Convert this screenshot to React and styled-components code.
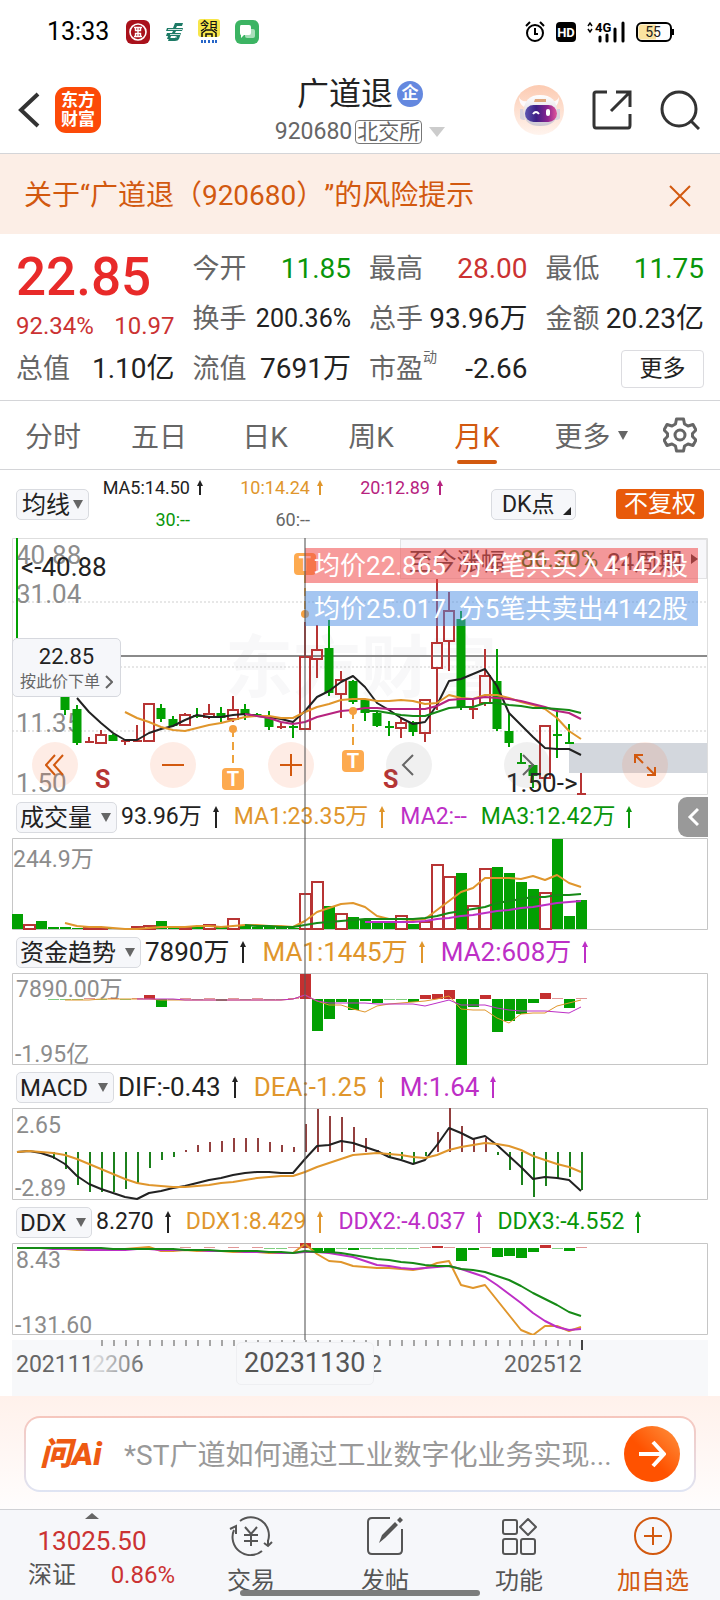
import React from "react";
import styled, { createGlobalStyle } from "styled-components";

const RED = "#cb3232";
const UP = "#b73434";
const GREEN = "#0a960a";
const BAR_GREEN = "#02a002";
const ORANGE = "#e0962c";
const PURPLE = "#bd2fc6";
const MAGENTA = "#b7237f";
const BRAND = "#d2590f";
const INK = "#222222";

const GlobalStyle = createGlobalStyle`
  * { box-sizing: border-box; }
  body {
    margin: 0;
    background: #fff;
    color: ${INK};
    font-family: Roboto, "Noto Sans CJK SC", sans-serif;
    text-spacing-trim: space-all;
  }
  button, input, select { font-family: inherit; color: inherit; }
  button { border: 0; padding: 0; background: none; cursor: pointer; }
  svg { display: block; }
`;

const Page = styled.div`
  width: 100%;
  min-height: 100vh;
  display: flex;
  flex-direction: column;
  background: #fff;
`;

/* ---------- status bar ---------- */
const StatusBar = styled.div`
  height: 64px;
  padding: 0 46px 0 47px;
  display: flex;
  align-items: center;
  justify-content: space-between;
`;
const StatusGroup = styled.div`
  display: flex;
  align-items: center;
  gap: ${(p) => p.$gap}px;
`;
const Clock = styled.span`
  font-size: 25px;
  line-height: 30px;
  color: #000;
  margin-right: 2px;
`;

/* ---------- title bar ---------- */
const TitleBar = styled.header`
  height: 90px;
  padding: 2px 20px 0 16px;
  border-bottom: 1px solid #d4d5d8;
  display: grid;
  grid-template-columns: 1fr auto 1fr;
  align-items: center;
`;
const BarSide = styled.div`
  display: flex;
  align-items: center;
  justify-content: ${(p) => (p.$end ? "flex-end" : "flex-start")};
  gap: ${(p) => p.$gap}px;
`;
const IconButton = styled.button`
  display: flex;
  align-items: center;
  justify-content: center;
`;
const BrandTile = styled.a`
  width: 46px;
  height: 46px;
  border-radius: 11px;
  background: #fc4a08;
  color: #fff;
  font-size: 17px;
  line-height: 19px;
  font-weight: 700;
  text-align: center;
  text-decoration: none;
  padding-top: 4px;
`;
const Titles = styled.div`
  display: flex;
  flex-direction: column;
  align-items: center;
  gap: 2px;
  padding-left: 4px;
`;
const StockName = styled.h1`
  margin: 0;
  display: flex;
  align-items: center;
  gap: 4px;
  font-size: 32px;
  line-height: 42px;
  font-weight: 400;
`;
const CorpBadge = styled.span`
  width: 26px;
  height: 26px;
  border-radius: 50%;
  background: #6488df;
  color: #fff;
  font-size: 17px;
  line-height: 25px;
  font-weight: 700;
  text-align: center;
`;
const CodeLine = styled.button`
  display: flex;
  align-items: center;
  gap: 3px;
  font-size: 23px;
  line-height: 30px;
  color: #666;
`;
const Exchange = styled.span`
  border: 1px solid #777;
  border-radius: 4px;
  font-size: 21px;
  line-height: 22px;
  padding: 0 1px;
`;
const Triangle = styled.span`
  width: 0;
  height: 0;
  flex: none;
  border-left: ${(p) => p.$w || 5}px solid transparent;
  border-right: ${(p) => p.$w || 5}px solid transparent;
  border-top: ${(p) => p.$h || 9}px solid ${(p) => p.$color || "#666"};
  margin-left: ${(p) => p.$ml || 0}px;
`;

/* ---------- notice ---------- */
const Notice = styled.div`
  height: 80px;
  padding: 3px 29px 0 24px;
  background: #fceee6;
  color: ${BRAND};
  display: flex;
  align-items: center;
  justify-content: space-between;
  font-size: 28px;
  line-height: 40px;
`;

/* ---------- quote ---------- */
const Quote = styled.section`
  height: 167px;
  padding: 10px 16px 0;
  border-bottom: 1px solid #d4d5d8;
  display: grid;
  grid-template-columns: repeat(4, 1fr);
  grid-template-rows: repeat(3, 50px);
  column-gap: 18px;
`;
const PriceBlock = styled.div`
  grid-row: span 2;
  color: ${RED};
`;
const BigPrice = styled.div`
  font-size: 53px;
  line-height: 66px;
  font-weight: 500;
  color: #e82a29;
`;
const Change = styled.div`
  display: flex;
  justify-content: space-between;
  font-size: 24px;
  line-height: 32px;
`;
const Stat = styled.div`
  display: flex;
  align-items: center;
  justify-content: space-between;
  white-space: nowrap;
  line-height: 40px;
`;
const StatLabel = styled.span`
  font-size: 27px;
  color: #666;
`;
const Sup = styled.sup`
  font-size: 14px;
  line-height: 14px;
  vertical-align: 16px;
`;
const StatValue = styled.span`
  font-size: ${(p) => (p.$small ? 25 : 28)}px;
  color: ${(p) => p.$color || INK};
`;
const MoreButton = styled.button`
  justify-self: end;
  align-self: center;
  width: 83px;
  height: 38px;
  border: 1px solid #dcdce0;
  border-radius: 4px;
  font-size: 23px;
  line-height: 34px;
`;

/* ---------- tabs ---------- */
const Tabs = styled.nav`
  height: 69px;
  padding-right: 12px;
  border-bottom: 1px solid #d4d5d8;
  display: grid;
  grid-template-columns: repeat(5, 106fr) 122fr 56fr;
`;
const Tab = styled.button`
  display: flex;
  align-items: center;
  justify-content: center;
  gap: 7px;
  font-size: 28px;
  color: ${(p) => (p.$active ? BRAND : "#666")};
  position: relative;
  &::after {
    content: "";
    display: ${(p) => (p.$active ? "block" : "none")};
    position: absolute;
    left: calc(50% - 20px);
    bottom: 5px;
    width: 40px;
    height: 4px;
    border-radius: 2px;
    background: ${BRAND};
  }
`;

/* ---------- moving averages ---------- */
const AverageRow = styled.div`
  height: 68px;
  padding: 0 16px;
  display: flex;
  align-items: center;
`;
const AverageGrid = styled.div`
  display: grid;
  grid-template-columns: 115px 120px 120px;
  grid-auto-rows: 32px;
  margin-right: auto;
  margin-bottom: 2px;
`;
const Average = styled.div`
  display: flex;
  align-items: center;
  justify-content: flex-end;
  gap: 6px;
  font-size: 18px;
  color: ${(p) => p.$color};
`;
const ArrowSlot = styled.span`
  width: 8px;
  flex: none;
`;
const Pill = styled.label`
  position: relative;
  height: 31px;
  border: 1px solid #d9dbe0;
  border-radius: 5px;
  background: #f6f7fa;
  display: flex;
  align-items: center;
  flex: none;
  padding-right: 5px;
`;
const PillSelect = styled.select`
  appearance: none;
  border: 0;
  background: none;
  margin: 0;
  padding: 1px 0 0 ${(p) => p.$pad}px;
  font-size: 24px;
  line-height: 28px;
  height: 29px;
  color: ${INK};
`;
const DkButton = styled.button`
  position: relative;
  width: 85px;
  height: 31px;
  border: 1px solid #d9dbe0;
  border-radius: 5px;
  background: #f6f7fa;
  font-size: 23px;
  line-height: 29px;
  text-align: left;
  padding-left: 10px;
  margin-right: 40px;
  &::after {
    content: "";
    position: absolute;
    right: 4px;
    bottom: 4px;
    border-left: 8px solid transparent;
    border-bottom: 8px solid ${INK};
  }
`;
const AdjustButton = styled.button`
  width: 88px;
  height: 30px;
  border-radius: 4px;
  background: #e85a0a;
  color: #fff;
  font-size: 24px;
  line-height: 30px;
`;

/* ---------- charts ---------- */
const ChartStack = styled.section`
  position: relative;
  padding: 0 12px;
`;
const Frame = styled.div`
  position: relative;
  border-radius: 1px;
  box-shadow: inset 0 0 0 1px ${(p) => p.$line || "#c6c6c6"};
`;
const ChartSvg = styled.svg`
  width: 100%;
  height: auto;
`;
const CrossLine = styled.div`
  position: absolute;
  top: 0;
  bottom: 56px;
  left: 42.2%;
  width: 2px;
  background: rgba(90, 90, 90, 0.55);
  pointer-events: none;
`;
const PeriodButton = styled.button`
  position: absolute;
  top: 1px;
  right: 1px;
  height: 40px;
  width: 44.1%;
  background: #f7f7fa;
  border: 1px solid #e2e2e4;
  display: flex;
  align-items: center;
  justify-content: center;
  gap: 9px;
  font-size: 24px;
  color: #333;
  white-space: nowrap;
`;
const PeriodValue = styled.span`
  color: #0a7a0a;
`;
const SideTriangle = styled.span`
  border-top: 5px solid transparent;
  border-bottom: 5px solid transparent;
  border-left: 7px solid #333;
`;
const Banner = styled.div`
  position: absolute;
  top: ${(p) => p.$top}px;
  left: 42.1%;
  right: 10px;
  height: 35px;
  padding-left: 9px;
  background: ${(p) => p.$bg};
  color: #fff;
  font-size: 26px;
  line-height: 36px;
  white-space: pre;
`;
const OrderButton = styled.button`
  position: absolute;
  left: 0;
  top: 100px;
  width: 109px;
  height: 59px;
  border: 1px solid #d6d8de;
  border-radius: 5px;
  background: #f6f7fa;
  display: flex;
  flex-direction: column;
  align-items: center;
  justify-content: center;
  padding-top: 2px;
  font-size: 22px;
  line-height: 27px;
`;
const OrderHint = styled.span`
  display: flex;
  align-items: center;
  gap: 5px;
  font-size: 16px;
  line-height: 24px;
  color: #666;
`;
const ZoomTools = styled.div`
  position: absolute;
  left: 20px;
  right: 40px;
  top: 204px;
  display: flex;
  justify-content: space-between;
`;
const ToolButton = styled.button`
  width: 46px;
  height: 46px;
  border-radius: 50%;
  background: ${(p) => (p.$gray ? "rgba(110,110,110,.1)" : "rgba(246,120,70,.14)")};
  display: flex;
  align-items: center;
  justify-content: center;
`;
const IndicatorHead = styled.div`
  height: 43px;
  padding: 1px 0 0 4px;
  display: flex;
  align-items: center;
  white-space: nowrap;
`;
const Readings = styled.div`
  display: flex;
  align-items: center;
  gap: ${(p) => (p.$compact ? 14 : 15)}px;
  margin: 0 auto 0 4px;
  font-size: ${(p) => (p.$compact ? 23 : 26)}px;
  line-height: 32px;
`;
const Reading = styled.span`
  display: flex;
  align-items: center;
  gap: 10px;
  color: ${(p) => p.$color};
`;
const CollapseButton = styled.button`
  width: 30px;
  height: 40px;
  border-radius: 9px 0 0 9px;
  background: #999;
  display: flex;
  align-items: center;
  justify-content: center;
`;
const Axis = styled.div`
  position: relative;
  margin-top: 5px;
  background: #f7f8fa;
`;
const CursorDate = styled.div`
  position: absolute;
  left: 32.2%;
  top: 2px;
  height: 43px;
  padding: 0 7px;
  border: 1px solid #eeeff2;
  border-radius: 5px;
  background: #f7f8fa;
  color: #555;
  font-size: 27px;
  line-height: 41px;
`;

/* ---------- AI question ---------- */
const AskPanel = styled.section`
  padding: 20px 24px 17px;
  background: linear-gradient(#fff1eb, #fffdfd);
`;
const AskBox = styled.form`
  height: 76px;
  border: 2px solid transparent;
  border-radius: 16px;
  background: linear-gradient(#fff, #fff) padding-box, linear-gradient(#f6c6bd, #dfe4f3) border-box;
  display: flex;
  align-items: center;
  padding: 0 14px;
`;
const AskLogo = styled.span`
  width: 79px;
  flex: none;
  color: #ee5a12;
  font-size: 32px;
  line-height: 40px;
  font-weight: 900;
  font-style: italic;
`;
const AskInput = styled.input`
  flex: 1;
  min-width: 0;
  margin: 0 12px 0 5px;
  padding: 3px 0 0;
  border: 0;
  outline: 0;
  background: none;
  font-size: 28px;
  line-height: 40px;
  height: 44px;
  &::placeholder { color: #999; opacity: 1; }
`;
const SendButton = styled.button`
  width: 56px;
  height: 56px;
  flex: none;
  border-radius: 50%;
  background: linear-gradient(45deg, #ff5200 45%, #ff9440);
  display: flex;
  align-items: center;
  justify-content: center;
`;

/* ---------- bottom bar ---------- */
const BottomBar = styled.footer`
  position: relative;
  height: 91px;
  border-top: 1px solid #d0d1d5;
  background: #f6f7fa;
  display: grid;
  grid-template-columns: 184fr repeat(4, 134fr);
`;
const IndexBlock = styled.button`
  display: flex;
  flex-direction: column;
  align-items: center;
  padding-top: 3px;
  color: ${RED};
  font-size: 26px;
  line-height: 36px;
`;
const IndexRow = styled.span`
  width: 100%;
  padding: 0 9px 0 28px;
  display: flex;
  justify-content: space-between;
  font-size: 24px;
  line-height: 32px;
`;
const IndexName = styled.span`
  color: #555;
`;
const CaretUp = styled.span`
  border-left: 7px solid transparent;
  border-right: 7px solid transparent;
  border-bottom: 6px solid #666;
  margin-bottom: 4px;
`;
const NavButton = styled.button`
  display: flex;
  flex-direction: column;
  align-items: center;
  padding-top: 6px;
  gap: 8px;
  font-size: 24px;
  line-height: 34px;
  color: ${(p) => (p.$accent ? BRAND : "#555")};
`;
const HomeIndicator = styled.div`
  position: absolute;
  left: 33.3%;
  right: 33.3%;
  bottom: 4px;
  height: 6px;
  border-radius: 3px;
  background: #7c7c7c;
`;

/* ---------- chart data, one slot per month ---------- */
const slotX = (i) => 5 + i * 12;
const points = (start, ys) => ys.map((y, k) => `${slotX(start + k)},${y}`).join(" ");

// [slot, rising, high, bodyTop, bodyBottom, low]
const candles = [
  [0, 0, 0, 0, 100, 100], [4, 0, 150, 150, 172, 177], [5, 0, 167, 171, 205, 207], [6, 1, 199, 204, 204, 205],
  [7, 1, 192, 196, 205, 205], [8, 0, 196, 197, 203, 203], [9, 1, 201, 203, 203, 207], [10, 1, 187, 203, 203, 203],
  [11, 1, 165, 165, 203, 203], [12, 0, 166, 170, 181, 184], [13, 0, 178, 181, 188, 188], [14, 1, 175, 176, 187, 187],
  [15, 0, 170, 178, 178, 180], [16, 1, 166, 175, 179, 181], [17, 0, 169, 175, 180, 184], [18, 1, 158, 171, 181, 184],
  [19, 0, 166, 171, 177, 182], [20, 0, 175, 176, 179, 179], [21, 0, 173, 180, 189, 192], [22, 1, 185, 189, 189, 191],
  [23, 0, 187, 189, 189, 200], [24, 1, 84, 118, 191, 191], [25, 1, 87, 111, 121, 140], [26, 0, 82, 110, 155, 158],
  [27, 1, 133, 141, 156, 180], [28, 0, 142, 143, 164, 166], [29, 0, 162, 162, 175, 183], [30, 0, 174, 175, 188, 189],
  [31, 0, 183, 189, 189, 198], [32, 1, 180, 184, 190, 200], [33, 0, 183, 184, 194, 198], [34, 1, 161, 161, 195, 204],
  [35, 1, 30, 104, 130, 172], [36, 1, 54, 72, 103, 133], [37, 0, 73, 81, 170, 172], [38, 1, 160, 171, 171, 181],
  [39, 1, 111, 137, 165, 168], [40, 0, 111, 143, 191, 193], [41, 0, 176, 193, 205, 209], [42, 0, 215, 225, 225, 226],
  [43, 0, 226, 227, 238, 250], [44, 1, 187, 187, 240, 240], [45, 0, 172, 197, 197, 220], [46, 0, 186, 205, 205, 206],
  [47, 1, 235, 256, 256, 257],
];
const ma5 = [160, 174, 185, 195, 202, 202, 195, 191, 188, 182, 177, 179, 179, 177, 176, 178, 179, 181, 184, 173, 159, 153, 144, 138, 149, 165, 172, 180, 186, 184, 167, 143, 141, 136, 131, 148, 175, 187, 199, 210, 211, 211, 217];
const ma10 = [174, 180, 184, 189, 192, 193, 190, 187, 185, 182, 179, 178, 178, 180, 180, 174, 169, 166, 162, 161, 161, 163, 163, 162, 163, 166, 165, 157, 160, 161, 157, 157, 160, 164, 167, 171, 180, 193, 201];
const ma20 = [176, 178, 180, 184, 186, 184, 179, 176, 173, 172, 170, 170, 171, 171, 171, 171, 168, 162, 161, 161, 159, 160, 161, 163, 166, 169, 173, 175, 181];
const ma30 = [173, 173, 175, 177, 178, 178, 174, 170, 169, 169, 165, 165, 167, 168, 170, 170, 171, 172, 175];

// top edge of each volume bar; "r" rising, "g" falling
const volume = "g76 r87 g83 g89 g89 g90 r90 r90 g90 g90 r89 r88 g83 g90 r89 g89 r87 g89 r81 g87 g89 g89 g89 g90 r56 r44 g68 r76 g79 g81 g84 g84 r78 g86 r84 r27 r39 g35 r68 r31 g29 g35 g44 g51 r55 g1 g78 g62".split(" ");
const volMa1 = [85, 88, 89, 89, 90, 91, 91, 90, 89, 89, 89, 88, 88, 89, 88, 87, 87, 88, 88, 89, 83, 74, 70, 66, 65, 69, 78, 81, 81, 82, 81, 72, 63, 54, 50, 40, 40, 40, 41, 38, 42, 37, 45, 49];
const volMa3 = [87, 88, 88, 89, 89, 87, 85, 84, 83, 82, 81, 81, 81, 81, 81, 80, 78, 75, 73, 71, 69, 65, 63, 61, 59, 59, 57, 57, 56];
const volMa2 = [84, 84, 84, 84, 84, 83, 81, 80, 78, 77, 75, 73, 72, 70, 69, 67, 65, 64, 63];

// far end of each bar measured from the zero line
const funds = [[3, 27], [4, 27], [5, 27], [6, 25], [7, 27], [8, 25], [9, 27], [10, 25], [11, 22], [12, 34], [13, 27], [14, 25], [15, 27], [16, 25], [17, 28], [18, 25], [19, 27], [20, 25], [21, 27], [22, 27], [23, 25], [24, 1], [25, 58], [26, 46], [27, 29], [28, 37], [29, 28], [30, 30], [31, 27], [32, 27], [33, 29], [34, 22], [35, 21], [36, 17], [37, 92], [38, 34], [39, 22], [40, 59], [41, 48], [42, 41], [43, 30], [44, 20], [45, 25], [46, 35], [47, 25]];
const fundMa1 = [27, 27, 27, 26, 26, 26, 26, 26, 27, 27, 27, 27, 27, 27, 27, 27, 27, 27, 27, 26, 22, 28, 32, 32, 36, 39, 33, 31, 30, 29, 28, 26, 23, 36, 37, 37, 45, 50, 41, 40, 40, 33, 30, 27];
const fundMa2 = [26, 26, 26, 26, 27, 27, 27, 27, 27, 27, 27, 27, 27, 26, 22, 28, 30, 30, 30, 30, 31, 31, 31, 31, 33, 30, 27, 32, 32, 32, 35, 37, 38, 38, 38, 39, 40, 34];

const macd = [51, 61, 77, 84, 84, 84, 81, 75, 60, 52, 49, 42, 37, 34, 33, 30, 30, 30, 34, 37, 39, 16, 1, 8, 9, 19, 30, 42, 49, 51, 55, 48, 24, 0, 18, 31, 30, 47, 62, 77, 89, 78, 71, 69, 82];
const dif = [44, 43, 45, 49, 56, 68, 76, 81, 85, 89, 91, 85, 83, 80, 78, 75, 72, 70, 67, 65, 64, 64, 65, 65, 51, 38, 37, 33, 35, 39, 43, 49, 52, 56, 52, 37, 20, 25, 31, 28, 37, 48, 59, 71, 69, 70, 72, 83];
const dea = [44, 43, 44, 45, 47, 51, 56, 61, 66, 71, 75, 77, 78, 79, 79, 78, 77, 75, 74, 72, 70, 69, 68, 68, 64, 59, 55, 51, 47, 46, 45, 46, 47, 49, 50, 47, 42, 39, 37, 35, 36, 38, 42, 48, 52, 56, 59, 64];

const ddx = [[12, 6], [14, 4], [16, 4], [18, 4], [20, 4], [21, 6], [22, 6], [23, 4], [24, 0], [25, 10], [26, 10], [27, 6], [28, 7], [29, 6], [30, 6], [31, 6], [32, 6], [33, 6], [34, 4], [35, 3], [36, 4], [37, 18], [38, 7], [39, 4], [40, 14], [41, 13], [42, 15], [43, 9], [44, 2], [45, 6], [46, 8], [47, 4]];
const ddx1 = [5, 5, 5, 5, 6, 7, 7, 7, 7, 6, 5, 4, 8, 8, 7, 8, 8, 8, 9, 9, 9, 10, 10, 10, 1, 11, 18, 19, 23, 24, 25, 25, 26, 27, 25, 20, 18, 42, 45, 42, 57, 72, 87, 92, 83, 83, 88, 84];
const ddx2 = [5, 5, 5, 6, 6, 6, 7, 7, 7, 7, 6, 6, 7, 7, 7, 7, 8, 8, 8, 9, 9, 9, 10, 10, 9, 9, 10, 12, 14, 18, 22, 23, 25, 26, 25, 24, 23, 26, 30, 34, 42, 51, 60, 70, 78, 84, 87, 86];
const ddx3 = [5, 5, 5, 5, 5, 5, 5, 5, 6, 6, 6, 6, 6, 6, 7, 7, 7, 8, 8, 8, 8, 9, 9, 10, 8, 9, 9, 10, 12, 14, 16, 17, 19, 20, 22, 23, 23, 26, 27, 29, 33, 37, 43, 50, 56, 62, 69, 73];

/* ---------- drawings ---------- */
function Line({ start = 0, ys, color, width = 2 }) {
  return <polyline points={points(start, ys)} fill="none" stroke={color} strokeWidth={width} strokeLinejoin="round" />;
}

function Candle({ d: [i, rising, high, top, bottom, low] }) {
  const x = slotX(i);
  const color = rising ? UP : BAR_GREEN;
  const flat = top === bottom || i === 0;
  return (
    <g stroke={color} strokeWidth="2">
      <path d={flat ? `M${x} ${high}V${low}` : `M${x} ${high}V${top}M${x} ${bottom}V${low}`} />
      {flat && i > 0 && <path d={`M${x - 4} ${top}H${x + 5}`} />}
      {!flat && rising === 1 && <rect x={x - 5} y={top + 1} width="10" height={bottom - top - 1} fill="none" />}
      {!flat && rising === 0 && <rect x={x - 3.5} y={top + 1} width="7" height={Math.max(1, bottom - top - 2)} fill={color} />}
    </g>
  );
}

function Marker({ x, dot, box }) {
  const up = box < dot;
  return (
    <g>
      <path d={up ? `M${x} ${box + 22}V${dot}` : `M${x} ${dot}V${box}`} stroke="#eda23c" strokeWidth="2" strokeDasharray="8 5" />
      <circle cx={x} cy={dot} r="4" fill="#f5a040" />
      <rect x={x - 11} y={box} width="22" height="22" rx="4" fill="#fdaa4f" />
      <text x={x} y={box + 18} fontSize="20" fontWeight="700" fill="#fff" textAnchor="middle">T</text>
    </g>
  );
}

function ZeroBars({ bars, zero }) {
  return bars.map(([i, y]) => (
    <rect key={i} x={slotX(i) - 5} y={Math.min(y, zero)} width="11" height={Math.abs(y - zero)} fill={y < zero ? "#c43030" : BAR_GREEN} opacity={Math.abs(y - zero) < 2 ? 0.5 : 1} />
  ));
}

function AxisText({ x = 4, y, size = 23, color = "#8c8c8c", children }) {
  return <text x={x} y={y} fontSize={size} fill={color}>{children}</text>;
}

function UpArrow({ size = 22 }) {
  return (
    <svg width="8" height={size} viewBox={`0 0 8 ${size}`} fill="none" stroke="currentColor" aria-hidden="true">
      <path d={`M4 2V${size}`} strokeWidth="2" />
      <path d="M1 6L4 0L7 6Z" fill="currentColor" stroke="none" />
    </svg>
  );
}

function Stroke({ w, h = w, box, width = 2, color = "currentColor", d, children }) {
  return (
    <svg width={w} height={h} viewBox={box || `0 0 ${w} ${h}`} fill="none" stroke={color} strokeWidth={width} aria-hidden="true">
      {d && <path d={d} />}
      {children}
    </svg>
  );
}

function PriceChart() {
  return (
    <Frame $line="#dedede">
      <ChartSvg viewBox="0 0 696 257">
        <text x="349" y="154" fontSize="68" fontWeight="700" fill="#f8f8f9" textAnchor="middle">东方财富</text>
        <path d="M0 64H696M0 129H696M0 193H696" stroke="#cfcfcf" strokeDasharray="2 2" />
        <rect x="557" y="205" width="138" height="30" fill="#d3d7dd" />
        <path d="M108 118H695" stroke="#8a8a8a" strokeWidth="2" />
        <AxisText y={26} size={26}>40.88</AxisText>
        <AxisText y={65} size={26}>31.04</AxisText>
        <AxisText y={194} size={26}>11.35</AxisText>
        <AxisText y={254} size={26}>1.50</AxisText>
        {candles.map((d) => <Candle key={d[0]} d={d} />)}
        <Line start={5} ys={ma5} color={INK} />
        <Line start={9} ys={ma10} color={ORANGE} />
        <Line start={19} ys={ma20} color={MAGENTA} />
        <Line start={29} ys={ma30} color="#168a16" />
        <Marker x={293} dot={76} box={15} />
        <Marker x={221} dot={191} box={230} />
        <Marker x={341} dot={173} box={212} />
        <text x="83" y="250" fontSize="25" fontWeight="700" fill={UP}>S</text>
        <text x="371" y="250" fontSize="25" fontWeight="700" fill={UP}>S</text>
        <AxisText x={9} y={38} size={26} color={INK}>&lt;-40.88</AxisText>
        <AxisText x={494} y={254} size={26} color={INK}>1.50-&gt;</AxisText>
      </ChartSvg>
      <PeriodButton>
        <span>至今涨幅</span>
        <PeriodValue>-86.20%</PeriodValue>
        <span>24周期</span>
        <SideTriangle />
      </PeriodButton>
      <Banner $top={10} $bg="rgba(240,73,73,.55)">{"均价22.865  分4笔共买入4142股"}</Banner>
      <Banner $top={53} $bg="rgba(75,141,227,.5)">{"均价25.017  分5笔共卖出4142股"}</Banner>
      <OrderButton>
        22.85
        <OrderHint>
          按此价下单
          <Stroke w={8} h={14} d="M1 1L7 7L1 13" />
        </OrderHint>
      </OrderButton>
      <ZoomTools>
        <ToolButton aria-label="更早"><Stroke w={20} h={22} color={BRAND} d="M10 1L1 11L10 21M18 1L9 11L18 21" /></ToolButton>
        <ToolButton aria-label="缩小"><Stroke w={22} color={BRAND} d="M0 11H22" /></ToolButton>
        <ToolButton aria-label="放大"><Stroke w={22} color={BRAND} d="M0 11H22M11 0V22" /></ToolButton>
        <ToolButton $gray aria-label="左移"><Stroke w={22} color="#666" d="M15 1L5 11L15 21" /></ToolButton>
        <ToolButton $gray aria-label="右移"><Stroke w={22} color="#666" d="M7 1L17 11L7 21" /></ToolButton>
        <ToolButton aria-label="全屏"><Stroke w={24} color={BRAND} d="M2 10V2H10M2 2L10 10M14 22H22V14M22 22L14 14" /></ToolButton>
      </ZoomTools>
    </Frame>
  );
}

function VolumeChart() {
  return (
    <Frame>
      <ChartSvg viewBox="0 0 696 92">
        <AxisText x={1} y={29}>244.9万</AxisText>
        {volume.map((v, i) => {
          const y = Number(v.slice(1));
          return v[0] === "r"
            ? <rect key={i} x={slotX(i) - 5} y={y} width="11" height={Math.max(1, 91 - y)} fill="#fff" stroke={UP} strokeWidth="2" />
            : <rect key={i} x={slotX(i) - 5} y={y} width="11" height={91 - y} fill={BAR_GREEN} />;
        })}
        <Line start={4} ys={volMa1} color={ORANGE} />
        <Line start={19} ys={volMa3} color="#168a16" />
        <Line start={29} ys={volMa2} color={PURPLE} />
      </ChartSvg>
    </Frame>
  );
}

function FundChart() {
  return (
    <Frame>
      <ChartSvg viewBox="0 0 696 92">
        <AxisText y={24}>7890.00万</AxisText>
        <AxisText x={3} y={89}>-1.95亿</AxisText>
        <ZeroBars bars={funds} zero={26} />
        <Line start={4} ys={fundMa1} color={ORANGE} width={1} />
        <Line start={10} ys={fundMa2} color={PURPLE} width={1} />
      </ChartSvg>
    </Frame>
  );
}

function MacdChart() {
  return (
    <Frame>
      <ChartSvg viewBox="0 0 696 92">
        <AxisText y={25}>2.65</AxisText>
        <AxisText x={3} y={88}>-2.89</AxisText>
        {macd.map((y, k) => (
          <path key={k} d={`M${slotX(k + 3) + 1} 44V${y}`} stroke={y < 44 ? "#93403f" : "#1c801c"} strokeWidth="2" />
        ))}
        <Line ys={dif} color={INK} />
        <Line ys={dea} color={ORANGE} />
      </ChartSvg>
    </Frame>
  );
}

function DdxChart() {
  return (
    <Frame>
      <ChartSvg viewBox="0 0 696 92">
        <AxisText y={25}>8.43</AxisText>
        <AxisText x={3} y={90}>-131.60</AxisText>
        <ZeroBars bars={ddx} zero={5} />
        <Line ys={ddx1} color={ORANGE} />
        <Line ys={ddx2} color={PURPLE} />
        <Line ys={ddx3} color="#168a16" />
      </ChartSvg>
    </Frame>
  );
}

function TimeAxis() {
  const ticks = Array.from({ length: 40 }, (_, k) => k + 7);
  return (
    <Axis>
      <ChartSvg viewBox="0 0 696 56">
        <defs>
          <linearGradient id="fade" x1="0" x2="1">
            <stop offset="0" stopColor="#666" stopOpacity="0.1" />
            <stop offset="1" stopColor="#666" />
          </linearGradient>
        </defs>
        <path d={ticks.map((i) => `M${slotX(i) + 1} 0V6`).join("")} stroke="#a5a5a5" strokeWidth="2" />
        <path d={`M${slotX(47) + 1} 0V10`} stroke="#444" strokeWidth="2" />
        <AxisText y={32} color="#666">202111</AxisText>
        <AxisText x={80} y={32} color="url(#fade)">2206</AxisText>
        <AxisText x={357} y={32} color="#666">2</AxisText>
        <AxisText x={492} y={32} color="#666">202512</AxisText>
      </ChartSvg>
      <CursorDate>20231130</CursorDate>
    </Axis>
  );
}

function Picker({ name, value, pad = 3, gap = 9 }) {
  return (
    <Pill>
      <PillSelect aria-label={name} defaultValue={value} $pad={pad}>
        <option>{value}</option>
      </PillSelect>
      <Triangle $ml={gap} />
    </Pill>
  );
}

function Indicator({ name, readings, compact, children }) {
  return (
    <IndicatorHead>
      <Picker name="指标" value={name} />
      <Readings $compact={compact}>
        {readings.map(([text, color, arrow = true]) => (
          <Reading key={text} $color={color}>{text}{arrow && <UpArrow />}</Reading>
        ))}
      </Readings>
      {children}
    </IndicatorHead>
  );
}

function StatusIcons() {
  return (
    <StatusBar>
      <StatusGroup $gap={15}>
        <Clock>13:33</Clock>
        <svg width="24" height="24" viewBox="0 0 24 24">
          <rect width="24" height="24" rx="6" fill="#a9111b" />
          <circle cx="12" cy="12" r="8" fill="none" stroke="#fff" strokeWidth="1.6" />
          <path d="M8 7.5H16M8 16.5H16M9.5 7.5V10.5H14.5V7.5M9.5 16.5V13.5H14.5V16.5M12 8V16" fill="none" stroke="#fff" strokeWidth="1.4" />
        </svg>
        <svg width="18" height="20" viewBox="0 0 18 20" fill="#1d7a66">
          <path d="M10 1H18L17 4H12L11 6H18L17 9H11L10 11H16L14 17Q13 19 10 19H3L4 16H10L11 14H6L5 17H2L3 14H1L2 11H7L8 9H1L2 6H8Z" />
          <path d="M5 12.500H15M3 7.500H17M7 15H12" stroke="#fff" strokeWidth="0.8" />
        </svg>
        <svg width="22" height="26" viewBox="0 0 22 26">
          <rect width="22" height="18" rx="3" fill="#f7e64b" />
          <text x="11" y="9" fontSize="9" fontWeight="700" textAnchor="middle" fill="#111">今日</text>
          <path d="M4 18V14L8 11H14L18 14V18M8 18V15H14V18M3 12L6 10M19 12L16 10" fill="none" stroke="#111" strokeWidth="1.5" />
          <path d="M3 22.5H8M10 22.5H12M14 22.5H19" stroke="#2766c8" strokeWidth="3" strokeDasharray="2 1" />
        </svg>
        <svg width="24" height="24" viewBox="0 0 24 24">
          <rect width="24" height="24" rx="6" fill="#3cb463" />
          <rect x="10" y="9" width="10" height="9" rx="2" fill="#a9dfba" />
          <path d="M6 5H14Q16 5 16 7V13Q16 15 14 15H9L6 18V15Q5 15 5 13V7Q5 5 6 5Z" fill="#fff" />
        </svg>
      </StatusGroup>
      <StatusGroup $gap={11}>
        <Stroke w={20} h={22} color="#000" width={2}>
          <circle cx="10" cy="12" r="8" />
          <path d="M10 7V13H13M1 5L5 1M19 5L15 1" />
        </Stroke>
        <svg width="20" height="20" viewBox="0 0 20 20">
          <rect width="20" height="20" rx="4" fill="#000" />
          <text x="10" y="15" fontSize="13" fontWeight="700" fill="#fff" textAnchor="middle">HD</text>
        </svg>
        <svg width="38" height="22" viewBox="0 0 38 22">
          <path d="M1 5L3 2L5 5M1 8L3 11L5 8" fill="none" stroke="#000" strokeWidth="1.5" />
          <text x="8" y="11" fontSize="13" fontWeight="700" fill="#000">4G</text>
          <path d="M13 20V16M20 20V14M28 20V8M36 20V2" stroke="#000" strokeWidth="3" strokeLinecap="round" />
        </svg>
        <svg width="38" height="20" viewBox="0 0 38 20">
          <rect x="1" y="1" width="34" height="18" rx="5" fill="#fff" stroke="#000" strokeWidth="2" />
          <path d="M6 2.500H20V17.500H6Q2.500 17.500 2.500 14V6Q2.500 2.500 6 2.500Z" fill="#fbe3a0" />
          <path d="M37 7V13" stroke="#000" strokeWidth="2" />
          <text x="17" y="15" fontSize="14" textAnchor="middle" fill="#222">55</text>
        </svg>
      </StatusGroup>
    </StatusBar>
  );
}

function Robot() {
  return (
    <svg width="50" height="50" viewBox="0 0 50 50" aria-hidden="true">
      <defs>
        <linearGradient id="halo" x1="0" y1="0" x2="0" y2="1">
          <stop offset="0" stopColor="#fccbb2" />
          <stop offset="1" stopColor="#fff4ee" />
        </linearGradient>
        <linearGradient id="shell" x1="0" y1="0" x2="0" y2="1">
          <stop offset="0" stopColor="#fff" />
          <stop offset="1" stopColor="#cdc8d2" />
        </linearGradient>
        <linearGradient id="visor" x1="0" x2="1">
          <stop offset="0" stopColor="#5a56b0" />
          <stop offset="0.35" stopColor="#3c1f86" />
          <stop offset="0.7" stopColor="#8a2390" />
          <stop offset="1" stopColor="#e0559a" />
        </linearGradient>
      </defs>
      <circle cx="25" cy="25" r="25" fill="url(#halo)" />
      <path d="M5 12Q7 17 13 16L10 22Q5 19 5 12ZM45 12Q43 17 38 16L41 22Q45 19 45 12Z" fill="#fdfafb" />
      <path d="M9 24H6V33Q7 35 11 35ZM43 24H46V33Q45 35 41 35Z" fill="#d8d3dc" />
      <path d="M10 27Q10 10 26 10Q43 10 43 27Q43 41 26 41Q10 41 10 27Z" fill="url(#shell)" />
      <path d="M21 14H32V17H20Z" fill="#dfa67c" />
      <rect x="11" y="20" width="32" height="17" rx="8.500" fill="url(#visor)" />
      <path d="M19 29Q22 25 25 29" fill="none" stroke="#fff" strokeWidth="2" />
      <rect x="32" y="24" width="4" height="7" rx="2" fill="#fff" />
    </svg>
  );
}

export default function App() {
  return (
    <Page>
      <GlobalStyle />
      <StatusIcons />

      <TitleBar>
        <BarSide $gap={15}>
          <IconButton aria-label="返回"><Stroke w={24} h={36} width={4} color="#333" d="M22 2L5 18L22 34" /></IconButton>
          <BrandTile href="#home">东方<br />财富</BrandTile>
        </BarSide>
        <Titles>
          <StockName>广道退<CorpBadge>企</CorpBadge></StockName>
          <CodeLine>920680<Exchange>北交所</Exchange><Triangle $w={8} $h={10} $color="#ccc" $ml={4} /></CodeLine>
        </Titles>
        <BarSide $end $gap={28}>
          <IconButton aria-label="智能助手"><Robot /></IconButton>
          <IconButton aria-label="分享">
            <Stroke w={40} h={40} width={3} color="#333" d="M15 2H4Q2 2 2 4V35Q2 38 4 38H36Q38 38 38 35V24M24 2H38V17M38 2L19 21" />
          </IconButton>
          <IconButton aria-label="搜索">
            <Stroke w={40} h={40} width={3} color="#333"><circle cx="19" cy="19" r="17" /><path d="M31 31L39 39" /></Stroke>
          </IconButton>
        </BarSide>
      </TitleBar>

      <Notice>
        <span>关于“广道退（920680）”的风险提示</span>
        <IconButton aria-label="关闭"><Stroke w={22} h={22} d="M1 1L21 21M21 1L1 21" /></IconButton>
      </Notice>

      <Quote>
        <PriceBlock>
          <BigPrice>22.85</BigPrice>
          <Change><span>92.34%</span><span>10.97</span></Change>
        </PriceBlock>
        <Stat><StatLabel>今开</StatLabel><StatValue $color={GREEN}>11.85</StatValue></Stat>
        <Stat><StatLabel>最高</StatLabel><StatValue $color={RED}>28.00</StatValue></Stat>
        <Stat><StatLabel>最低</StatLabel><StatValue $color={GREEN}>11.75</StatValue></Stat>
        <Stat><StatLabel>换手</StatLabel><StatValue $small>200.36%</StatValue></Stat>
        <Stat><StatLabel>总手</StatLabel><StatValue>93.96万</StatValue></Stat>
        <Stat><StatLabel>金额</StatLabel><StatValue>20.23亿</StatValue></Stat>
        <Stat><StatLabel>总值</StatLabel><StatValue>1.10亿</StatValue></Stat>
        <Stat><StatLabel>流值</StatLabel><StatValue>7691万</StatValue></Stat>
        <Stat><StatLabel>市盈<Sup>动</Sup></StatLabel><StatValue>-2.66</StatValue></Stat>
        <MoreButton>更多</MoreButton>
      </Quote>

      <Tabs>
        <Tab>分时</Tab>
        <Tab>五日</Tab>
        <Tab>日K</Tab>
        <Tab>周K</Tab>
        <Tab $active>月K</Tab>
        <Tab>更多<Triangle /></Tab>
        <Tab aria-label="设置">
          <Stroke w={34} h={36} width={3}>
            <path d="M13.500 2H20.500L21.500 7L25 9L30 7.500L33 13L29.500 16.500V19.500L33 23L30 28.500L25 27L21.500 29L20.500 34H13.500L12.500 29L9 27L4 28.500L1 23L4.500 19.500V16.500L1 13L4 7.500L9 9L12.500 7Z" strokeLinejoin="round" />
            <circle cx="17" cy="18" r="5" />
          </Stroke>
        </Tab>
      </Tabs>

      <AverageRow>
        <Picker name="均线类型" value="均线" pad={5} gap={3} />
        <AverageGrid>
          <Average $color={INK}>MA5:14.50<UpArrow size={15} /></Average>
          <Average $color={ORANGE}>10:14.24<UpArrow size={15} /></Average>
          <Average $color={MAGENTA}>20:12.89<UpArrow size={15} /></Average>
          <Average $color={GREEN}>30:--<ArrowSlot /></Average>
          <Average $color="#666">60:--<ArrowSlot /></Average>
        </AverageGrid>
        <DkButton>DK点</DkButton>
        <AdjustButton>不复权</AdjustButton>
      </AverageRow>

      <ChartStack>
        <PriceChart />
        <Indicator compact name="成交量" readings={[["93.96万", INK], ["MA1:23.35万", ORANGE], ["MA2:--", PURPLE, false], ["MA3:12.42万", GREEN]]}>
          <CollapseButton aria-label="展开侧栏"><Stroke w={12} h={20} width={3} color="#fff" d="M11 2L3 10L11 18" /></CollapseButton>
        </Indicator>
        <VolumeChart />
        <Indicator name="资金趋势" readings={[["7890万", INK], ["MA1:1445万", ORANGE], ["MA2:608万", PURPLE]]} />
        <FundChart />
        <Indicator name="MACD" readings={[["DIF:-0.43", INK], ["DEA:-1.25", ORANGE], ["M:1.64", PURPLE]]} />
        <MacdChart />
        <Indicator compact name="DDX" readings={[["8.270", INK], ["DDX1:8.429", ORANGE], ["DDX2:-4.037", PURPLE], ["DDX3:-4.552", GREEN]]} />
        <DdxChart />
        <TimeAxis />
        <CrossLine />
      </ChartStack>

      <AskPanel>
        <AskBox onSubmit={(e) => e.preventDefault()}>
          <AskLogo>问Ai</AskLogo>
          <AskInput aria-label="提问" placeholder="*ST广道如何通过工业数字化业务实现..." />
          <SendButton type="submit" aria-label="发送">
            <Stroke w={28} h={32} width={4} color="#fff" d="M1 16H26M15 4L26 16L15 28" />
          </SendButton>
        </AskBox>
      </AskPanel>

      <BottomBar>
        <IndexBlock>
          <CaretUp />
          13025.50
          <IndexRow><IndexName>深证</IndexName><span>0.86%</span></IndexRow>
        </IndexBlock>
        <NavButton>
          <Stroke w={44} h={40}>
            <path d="M11 5A18 18 0 0 1 39 25M33 35A18 18 0 0 1 5 14" />
            <path d="M1 13L7 10V18M35 27L39 30L43 26M39 30V24" />
            <path d="M16 11L22 18L28 11M22 18V30M15 19H29M15 25H29" />
          </Stroke>
          交易
        </NavButton>
        <NavButton>
          <Stroke w={38} h={40}>
            <path d="M24 2H6Q2 2 2 6V34Q2 38 6 38H32Q36 38 36 34V13" />
            <path d="M13 27L16 19L29 6L32 9L19 22ZM31 4L34 1L37 4L34 7Z" fill="#555" stroke="none" />
          </Stroke>
          发帖
        </NavButton>
        <NavButton>
          <Stroke w={36} h={40}>
            <rect x="2" y="4" width="14" height="14" rx="2" />
            <rect x="2" y="23" width="14" height="15" rx="2" />
            <rect x="20" y="23" width="14" height="15" rx="2" />
            <path d="M27 3L35 11L27 19L19 11Z" strokeLinejoin="round" />
          </Stroke>
          功能
        </NavButton>
        <NavButton $accent>
          <Stroke w={38} h={40}><circle cx="19" cy="20" r="18" /><path d="M10 20H28M19 11V29" /></Stroke>
          加自选
        </NavButton>
        <HomeIndicator />
      </BottomBar>
    </Page>
  );
}
